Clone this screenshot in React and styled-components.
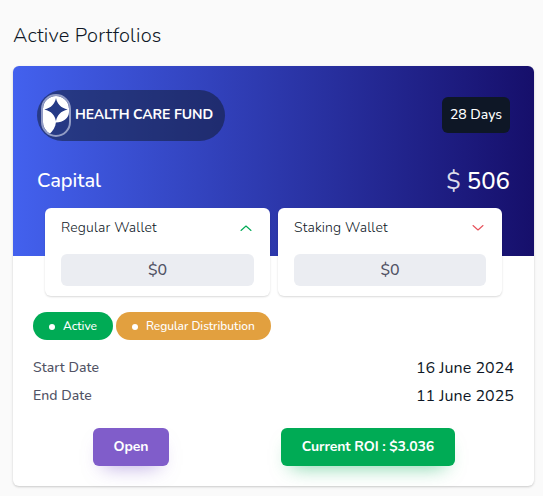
import styled, { createGlobalStyle } from 'styled-components';


const wallets = [
    { name: 'Regular Wallet', amount: '$0', trend: 'up' },
    { name: 'Staking Wallet', amount: '$0', trend: 'down' },
];

const dates = [
    { label: 'Start Date', value: '16 June 2024' },
    { label: 'End Date', value: '11 June 2025' },
];

const FundLogo = () => (
    <Logo viewBox="0 0 30 43" aria-hidden="true">
        <clipPath id="capsule">
            <rect x="2" y="2" width="26" height="39" rx="13" />
        </clipPath>
        <g clipPath="url(#capsule)" fill="#fff">
            <rect x="0" y="0" width="30" height="16" />
            <path d="M15 14H28V18C28 24 22 28.500 15 28.500Z" />
            <path d="M0 14H14L15 28C14.500 33 12 37 8.500 40L0 38Z" />
            <path fill="#253a86" d="M15 4C16.300 10 19.500 13.800 26.700 15.500C19.500 17.300 16.300 21 15 27C13.700 21 10.500 17.300 3.300 15.500C10.500 13.800 13.700 10 15 4Z" />
        </g>
        <rect x="1" y="1" width="28" height="41" rx="14" fill="none" stroke="#929cc5" strokeWidth="2" />
    </Logo>
)

const Chevron = ({ trend }) => (
    <ChevronIcon viewBox="0 0 12 8" $trend={trend} aria-hidden="true">
        <path d={trend === 'up' ? 'M1 6.500L6 2L11 6.500' : 'M1 1.500L6 6L11 1.500'} />
    </ChevronIcon>
)

const Wallet = ({ name, amount, trend }) => (
    <WalletCard>
        <WalletHead>
            <WalletName>{name}</WalletName>
            <Chevron trend={trend} />
        </WalletHead>
        <WalletAmount>{amount}</WalletAmount>
    </WalletCard>
)

const App = () => {
    return (
        <>
            <GlobalStyle />
            <Page>
                <Title>Active Portfolios</Title>
                <Card>
                    <Header>
                        <HeaderRow>
                            <Fund>
                                <FundLogo />
                                <FundName>HEALTH CARE FUND</FundName>
                            </Fund>
                            <Days>28 Days</Days>
                        </HeaderRow>
                        <CapitalRow>
                            <CapitalLabel>Capital</CapitalLabel>
                            <CapitalValue><Currency>$</Currency> 506</CapitalValue>
                        </CapitalRow>
                    </Header>
                    <Wallets>
                        {wallets.map(wallet => <Wallet key={wallet.name} {...wallet} />)}
                    </Wallets>
                    <Details>
                        <Badges>
                            <Badge $color="#00ab55">Active</Badge>
                            <Badge $color="#e2a03f">Regular Distribution</Badge>
                        </Badges>
                        <Dates>
                            {dates.map(({ label, value }) => (
                                <DateRow key={label}>
                                    <DateLabel>{label}</DateLabel>
                                    <DateValue>{value}</DateValue>
                                </DateRow>
                            ))}
                        </Dates>
                        <Actions>
                            <Button $color="#805dca" $shadow="rgba(128, 93, 202, 0.6)" $width="76px">Open</Button>
                            <Button $color="#00ab55" $shadow="rgba(0, 171, 85, 0.6)" $width="174px">Current ROI : $3.036</Button>
                        </Actions>
                    </Details>
                </Card>
            </Page>
        </>
    )
}

export default App;


// ---styles---

const GlobalStyle = createGlobalStyle`
    * {
        box-sizing: border-box;
    }
    body {
        margin: 0;
        background: #fafafa;
        color: #0e1726;
        font-family: Nunito, Lato, sans-serif;
        font-size: 14px;
    }
`

const Page = styled.main`
    height: 496px;
    padding: 22px 9px 0 13px;
    overflow: hidden;
`

const Title = styled.h1`
    margin: 0 0 16px;
    font-weight: 300;
    font-size: 20px;
    line-height: 28px;
    letter-spacing: 0.2px;
`

const Card = styled.section`
    height: 420px;
    border-radius: 6px;
    background: #fff;
    box-shadow: 0 1px 3px rgba(0, 0, 0, 0.1), 0 1px 2px rgba(0, 0, 0, 0.1);
`

const Header = styled.header`
    height: 190px;
    padding: 24px 24px 0;
    border-radius: 6px 6px 0 0;
    background: linear-gradient(to right, #4361ee, #160f6b);
    color: #fff;
`

const HeaderRow = styled.div`
    display: flex;
    justify-content: space-between;
    align-items: center;
`

const Fund = styled.div`
    display: flex;
    align-items: center;
    width: 188px;
    height: 51px;
    padding: 0 4px;
    border-radius: 26px;
    background: rgba(14, 23, 38, 0.5);
`

const Logo = styled.svg`
    width: 30px;
    height: 43px;
    margin-right: 4px;
    flex: none;
`

const FundName = styled.h2`
    margin: 0 0 2px;
    font-weight: 700;
    font-size: 14px;
    letter-spacing: -0.1px;
    white-space: nowrap;
`

const Days = styled.div`
    width: 68px;
    height: 36px;
    margin-bottom: 1px;
    border-radius: 6px;
    background: #0e1726;
    font-weight: 500;
    line-height: 35px;
    text-align: center;
    white-space: nowrap;
`

const CapitalRow = styled.div`
    display: flex;
    justify-content: space-between;
    align-items: center;
    height: 32px;
    margin-top: 24px;
`

const CapitalLabel = styled.span`
    margin-bottom: 2px;
    font-weight: 500;
    font-size: 20px;
`

const CapitalValue = styled.span`
    font-size: 24px;
    font-weight: 500;
`

const Currency = styled.span`
    font-weight: 400;
    opacity: 0.85;
`

const Wallets = styled.div`
    display: grid;
    grid-template-columns: 225px 224px;
    gap: 8px;
    margin-top: -48px;
    padding-left: 32px;
`

const WalletCard = styled.div`
    height: 88px;
    padding: 10px 16px 0;
    border-radius: 6px;
    background: #fff;
    box-shadow: 0 1px 2px rgba(0, 0, 0, 0.15);
`

const WalletHead = styled.div`
    display: flex;
    justify-content: space-between;
    align-items: center;
    height: 20px;
    margin-bottom: 16px;
`

const WalletName = styled.span`
    margin-bottom: 2px;
    font-weight: 300;
    font-size: 14px;
    letter-spacing: 0.15px;
`

const ChevronIcon = styled.svg`
    width: 12px;
    height: 8px;
    margin-right: 2px;
    fill: none;
    stroke: ${({ $trend }) => ($trend === 'up' ? '#00ab55' : '#e7515a')};
    stroke-width: 1.1;
    stroke-linecap: round;
    stroke-linejoin: round;
`

const WalletAmount = styled.div`
    height: 32px;
    border-radius: 6px;
    background: #ebedf2;
    color: #515365;
    font-size: 16px;
    font-weight: 500;
    line-height: 32px;
    text-align: center;
`

const Details = styled.div`
    padding: 16px 20px 0;
`

const Badges = styled.div`
    display: flex;
    gap: 3px;
`

const Badge = styled.span`
    display: flex;
    align-items: center;
    height: 28px;
    padding: 0 16px;
    border-radius: 14px;
    background: ${({ $color }) => $color};
    color: #fff;
    font-size: 12px;
    font-weight: 500;
    letter-spacing: -0.03px;
    &::before {
        content: '';
        width: 6px;
        height: 6px;
        margin: 2px 8px 0 0;
        border-radius: 50%;
        background: #fff;
    }
`

const Dates = styled.div`
    margin-top: 13px;
`

const DateRow = styled.div`
    display: flex;
    justify-content: space-between;
    align-items: center;
    height: 28px;
`

const DateLabel = styled.span`
    color: #515365;
    font-size: 14px;
    font-weight: 500;
    letter-spacing: 0.05px;
`

const DateValue = styled.span`
    margin-top: 2px;
    font-size: 16px;
    letter-spacing: 0.04px;
`

const Actions = styled.div`
    display: flex;
    gap: 112px;
    margin-top: 19px;
    padding-left: 60px;
`

const Button = styled.button`
    width: ${({ $width }) => $width};
    height: 38px;
    padding: 0 0 2px;
    border: none;
    border-radius: 6px;
    background: ${({ $color }) => $color};
    box-shadow: 0 10px 20px -10px ${({ $shadow }) => $shadow};
    color: #fff;
    font-family: inherit;
    font-weight: 700;
    font-size: 14px;
    letter-spacing: -0.1px;
    white-space: nowrap;
`
